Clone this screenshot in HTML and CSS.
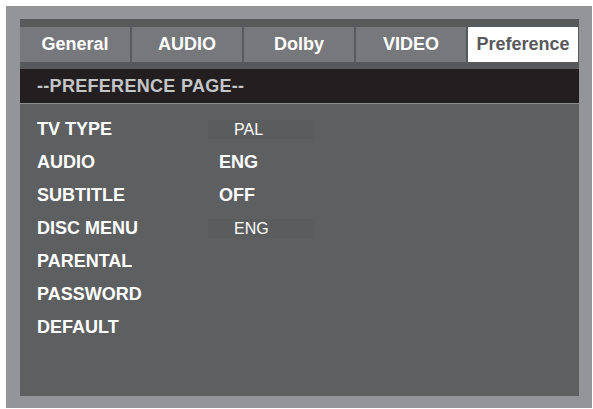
FILE: index.html
```html
<!DOCTYPE html>
<html>
<head>
<meta charset="utf-8">
<link rel="stylesheet" href="styles.css">
</head>
<body>
<div class="frame">
  <div class="panel">
    <div class="tabs">
      <div class="tab">General</div>
      <div class="tab">AUDIO</div>
      <div class="tab">Dolby</div>
      <div class="tab">VIDEO</div>
      <div class="tab active">Preference</div>
    </div>
    <div class="header">--PREFERENCE PAGE--</div>
    <div class="rows">
      <div class="row"><span class="label">TV TYPE</span><span class="value boxed">PAL</span></div>
      <div class="row"><span class="label">AUDIO</span><span class="value strong">ENG</span></div>
      <div class="row"><span class="label">SUBTITLE</span><span class="value strong">OFF</span></div>
      <div class="row"><span class="label">DISC MENU</span><span class="value boxed">ENG</span></div>
      <div class="row"><span class="label">PARENTAL</span></div>
      <div class="row"><span class="label">PASSWORD</span></div>
      <div class="row"><span class="label">DEFAULT</span></div>
    </div>
  </div>
</div>
</body>
</html>
```
FILE: styles.css
```css
html, body {
  margin: 0;
  padding: 0;
  background: #ffffff;
}
body {
  font-family: "Liberation Sans", Arial, sans-serif;
}
.frame {
  margin: 6px 0 0 6px;
  width: 586px;
  height: 402px;
  box-sizing: border-box;
  background: #939598;
  padding: 13px 13px 12px 14px;
}
.panel {
  height: 100%;
  background: #5e5f61;
  display: flex;
  flex-direction: column;
}
.tabs {
  display: flex;
  gap: 2px;
  padding: 8px 1px 7px 0;
  background: #58595b;
}
.tab {
  flex: 1;
  height: 35px;
  line-height: 35px;
  background: #77787b;
  color: #ffffff;
  font-weight: bold;
  font-size: 18px;
  text-align: center;
}
.tab.active {
  background: #ffffff;
  color: #58595b;
}
.header {
  height: 33px;
  line-height: 33px;
  padding: 1px 0 0 17px;
  background: #231f20;
  border-bottom: 1px solid #8a8b8d;
  color: #c4c5c7;
  font-weight: bold;
  font-size: 18px;
  letter-spacing: 0.3px;
}
.rows {
  padding: 9px 0 0 17px;
  display: flex;
  flex-direction: column;
}
.row {
  height: 33px;
  display: flex;
  align-items: center;
}
.label {
  width: 171px;
  color: #ffffff;
  font-weight: bold;
  font-size: 18px;
}
.value {
  color: #ffffff;
}
.value.strong {
  font-weight: bold;
  font-size: 18px;
  padding-left: 11px;
}
.value.boxed {
  width: 106px;
  height: 19px;
  line-height: 19px;
  box-sizing: border-box;
  padding-left: 26px;
  background: #5b5c5e;
  font-size: 16px;
}
```
